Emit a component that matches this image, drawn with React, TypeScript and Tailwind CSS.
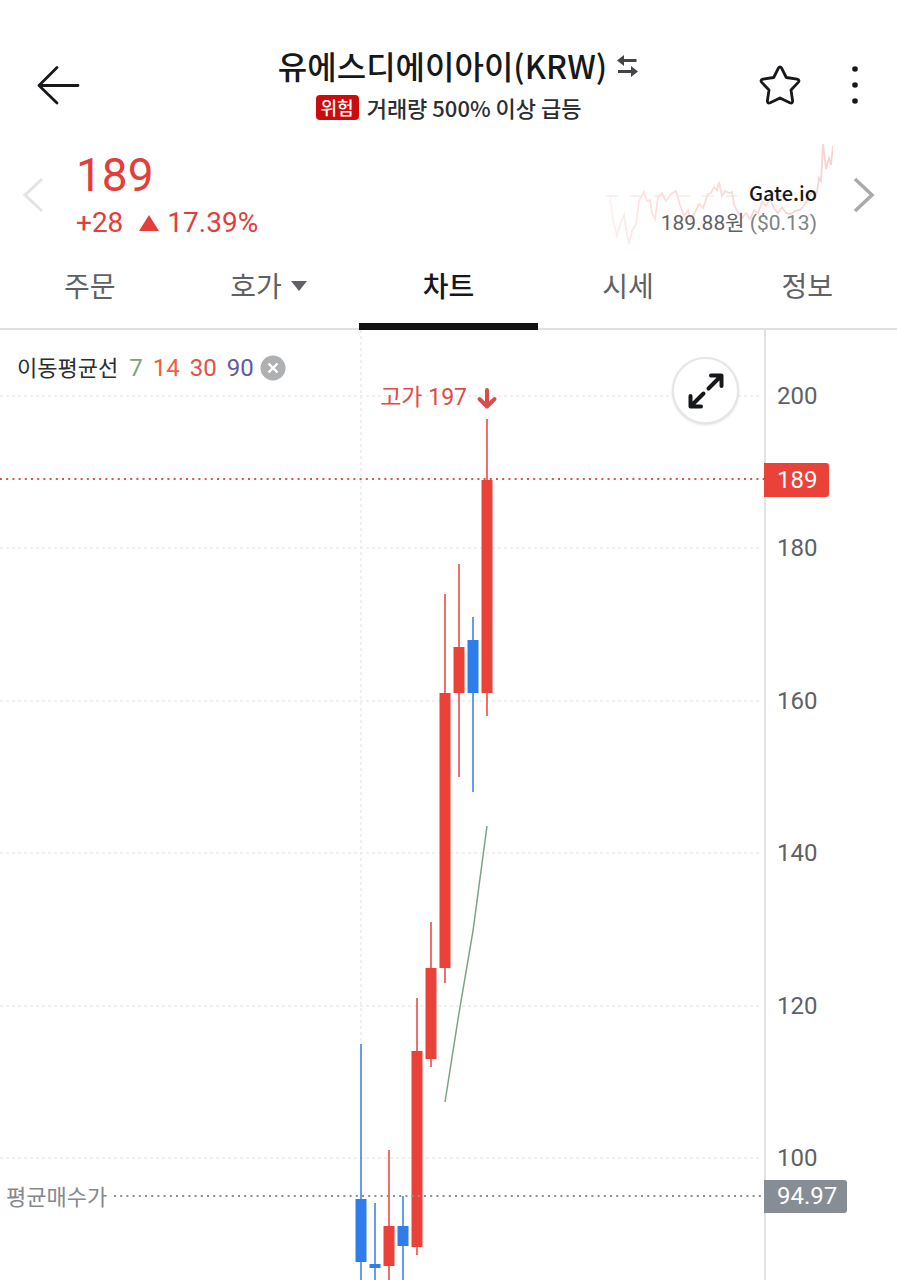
import React from "react";

interface Candle {
  x: number;
  open: number;
  close: number;
  high: number;
  low: number;
}

interface Average {
  period: number;
  className: string;
}

const UP = "#ea4139";
const DOWN = "#2f7deb";

const CHART_HEIGHT = 950;
const PX_PER_UNIT = 7.62;
const CURRENT_PRICE = 189;
const AVERAGE_PRICE = 94.97;

const ticks = [200, 180, 160, 140, 120, 100];
const tabs = ["주문", "호가", "차트", "시세", "정보"];

const averages: Average[] = [
  { period: 7, className: "text-[#7da283]" },
  { period: 14, className: "text-[#f0603a]" },
  { period: 30, className: "text-[#e4504e]" },
  { period: 90, className: "text-[#6258a6]" },
];

const candles: Candle[] = [
  { x: 361, open: 94.6, close: 86.4, high: 115, low: 80 },
  { x: 375, open: 86.1, close: 85.5, high: 94.1, low: 80 },
  { x: 389, open: 85.8, close: 91.1, high: 101, low: 80 },
  { x: 403, open: 91.1, close: 88.4, high: 95, low: 80 },
  { x: 417, open: 88.3, close: 114, high: 121, low: 87.3 },
  { x: 431, open: 113, close: 125, high: 131, low: 112 },
  { x: 445, open: 125, close: 161, high: 174, low: 123 },
  { x: 459, open: 161, close: 167, high: 178, low: 150 },
  { x: 473, open: 168, close: 161, high: 171, low: 148 },
  { x: 487, open: 161, close: 189, high: 197, low: 158 },
];

const ma7 = [
  { x: 445, value: 107.3 },
  { x: 459, value: 119 },
  { x: 473, value: 129.8 },
  { x: 487, value: 143.6 },
];

const toY = (price: number) => Math.round(66 + (200 - price) * PX_PER_UNIT);

const Header = () => (
  <header className="grid grid-cols-[1fr_auto_1fr] items-center pt-[45px]">
    <button type="button" aria-label="뒤로" className="ml-9 justify-self-start">
      <svg width="44" height="40" viewBox="0 0 44 40" fill="none" stroke="#17181b" strokeWidth="2.8" strokeLinecap="round" strokeLinejoin="round">
        <path d="M42 20.5H3M21 2.500L3 20.500L21 38" />
      </svg>
    </button>
    <div className="pb-1">
      <div className="flex h-10 items-center gap-2 pl-5">
        <h1 className="whitespace-nowrap text-[32px] font-medium leading-10 text-[#17181b]">
          유에스디에이아이(KRW)
        </h1>
        <button type="button" aria-label="마켓 전환">
          <svg width="24" height="24" viewBox="0 0 24 24" fill="#434548">
            <path d="M2 7.500L9 2V6H21.500V9H9V13Z" />
            <path d="M23 18.500L16 13V17H3V20H16V24Z" />
          </svg>
        </button>
      </div>
      <p className="mt-2 flex h-7 items-center justify-center gap-2 whitespace-nowrap text-[22px] font-medium leading-7 text-[#2b2d31]">
        <span className="rounded-sm bg-[#cd0b0b] px-[5px] text-lg leading-[25px] text-white">위험</span>
        거래량 500% 이상 급등
      </p>
    </div>
    <div className="mr-8 flex items-center gap-[43px] justify-self-end">
      <button type="button" aria-label="관심 등록">
        <svg width="44" height="44" viewBox="0 0 44 44" fill="none" stroke="#17181b" strokeWidth="2.8" strokeLinejoin="round">
          <path d="M20.400 5.100Q22 2.600 23.600 5.100L28.300 14.500L39 16.200Q42.200 17 40.200 19.400L33 27L34.600 37.800Q34.700 41 31.800 39.800L22 35L12.200 39.800Q9.300 41 9.400 37.800L11 27L3.800 19.400Q1.800 17 5 16.200L15.700 14.500Z" />
        </svg>
      </button>
      <button type="button" aria-label="더보기">
        <svg width="20" height="44" viewBox="0 0 20 44" fill="#17181b">
          <circle cx="10" cy="6" r="2.800" />
          <circle cx="10" cy="22" r="2.800" />
          <circle cx="10" cy="38" r="2.800" />
        </svg>
      </button>
    </div>
  </header>
);

const Sparkline = () => (
  <svg width="232" height="106" viewBox="0 0 232 106" fill="none" className="absolute -right-4 -top-9">
    <defs>
      <linearGradient id="sparkline" x1="0" x2="1" y1="0" y2="0">
        <stop offset="0" stopColor="#fdf1f1" />
        <stop offset="0.2" stopColor="#fae0de" />
        <stop offset="1" stopColor="#f8d3d1" />
      </linearGradient>
    </defs>
    <path d="M5 53H190" stroke="#f9eaea" strokeWidth="1.500" strokeDasharray="12 12" />
    <path
      d="M9 55L12 77L16 93L20 79L23 72L26 91L28 101L31 88L35 81L38 58L43 49L46 58L49 57L51 70L54 76L57 54L61 50L65 58L70 51L75 48L79 62L83 73L87 67L90 77L94 69L98 61L102 65L107 51L110 50L113 44L116 47L118 39L121 53L124 48L128 50L131 49L133 62L137 69L141 75L145 70L149 76L153 67L157 70L161 59L165 63L169 56L173 65L177 70L181 64L185 70L190 71L194 68L199 67L204 61L208 54L212 48L216 50L218 35L220 38L222 1L225 26L228 15L230 22L232 3"
      stroke="url(#sparkline)"
      strokeWidth="1.800"
    />
  </svg>
);

const PriceSummary = () => (
  <section className="flex items-center px-[22px] pb-3 pt-[26px]">
    <button type="button" aria-label="이전">
      <svg width="22" height="36" viewBox="0 0 22 36" fill="none" stroke="#e3e3e4" strokeWidth="3">
        <path d="M20 2L3 18L20 34" />
      </svg>
    </button>
    <div className="ml-8 font-[Roboto,'Noto_Sans_CJK_KR',sans-serif] text-[#e23e3a]">
      <p className="text-[46px] leading-[48px]">189</p>
      <p className="mt-2 flex items-center gap-2 text-[28px] leading-8">
        +28
        <svg width="20" height="16" viewBox="0 0 20 16" fill="currentColor" className="ml-2">
          <path d="M10 0L20 16H0Z" />
        </svg>
        17.39%
      </p>
    </div>
    <div className="relative ml-auto mr-9 self-end text-right">
      <Sparkline />
      <p className="relative text-xl font-medium leading-7 text-[#17181b]">Gate.io</p>
      <p className="relative font-[Roboto,'Noto_Sans_CJK_KR',sans-serif] text-[21px] leading-8 text-[#808286]">
        <span className="text-[#5f6165]">189.88원</span> ($0.13)
      </p>
    </div>
    <button type="button" aria-label="다음">
      <svg width="22" height="36" viewBox="0 0 22 36" fill="none" stroke="#a9aaac" strokeWidth="3.500">
        <path d="M2 2L19 18L2 34" />
      </svg>
    </button>
  </section>
);

const Tabs = () => (
  <nav className="grid h-[79px] grid-cols-5">
    {tabs.map((tab) => {
      const active = tab === "차트";
      return (
        <button key={tab} type="button" className="flex flex-col text-[28px] leading-10">
          <span
            className={
              active
                ? "flex h-[72px] w-full items-center justify-center pb-1 font-medium text-[#17181b]"
                : "flex h-[72px] w-full items-center justify-center gap-2 pb-1 text-[#5f6165]"
            }
          >
            {tab}
            {tab === "호가" && (
              <svg width="18" height="14" viewBox="0 0 18 14" fill="#5f6165">
                <path d="M1 3H17L9 13Z" />
              </svg>
            )}
          </span>
          <span className={active ? "h-[7px] w-full bg-[#111214]" : "h-[7px] w-full border-b-2 border-[#e0e0e1]"} />
        </button>
      );
    })}
  </nav>
);

const Legend = () => (
  <div className="absolute left-[17px] top-5 flex h-9 items-center text-[22px] text-[#2b2d31]">
    <span className="pb-1">이동평균선</span>
    <div className="ml-[11px] flex gap-[10px] font-[Roboto,sans-serif] text-2xl">
      {averages.map((item) => (
        <span key={item.period} className={item.className}>
          {item.period}
        </span>
      ))}
    </div>
    <button type="button" aria-label="이동평균선 제거" className="ml-[6px]">
      <svg width="26" height="26" viewBox="0 0 26 26" fill="none">
        <circle cx="13" cy="13" r="12.500" fill="#afb0b1" />
        <path d="M8.500 8.500L17.500 17.500M17.500 8.500L8.500 17.500" stroke="#fff" strokeWidth="2.400" />
      </svg>
    </button>
  </div>
);

const Plot = () => (
  <svg width="100%" height={CHART_HEIGHT} className="block">
    {/* grid */}
    {ticks.map((tick) => (
      <line key={tick} x1="0" x2="99.500%" y1={toY(tick)} y2={toY(tick)} stroke="#ebebec" strokeWidth="1.500" strokeDasharray="3 3" />
    ))}
    <line x1="361" x2="361" y1="0" y2={toY(115)} stroke="#ebebec" strokeWidth="1.500" strokeDasharray="3 3" />

    {/* candles */}
    {candles.map((candle) => {
      const color = candle.close >= candle.open ? UP : DOWN;
      const top = toY(Math.max(candle.open, candle.close));
      const bottom = toY(Math.min(candle.open, candle.close));
      return (
        <g key={candle.x}>
          <line x1={candle.x} x2={candle.x} y1={toY(candle.high)} y2={toY(candle.low)} stroke={color} strokeWidth="1.500" />
          <rect x={candle.x - 5.5} y={top} width="11" height={bottom - top} fill={color} />
        </g>
      );
    })}

    {/* 7 day average */}
    <polyline points={ma7.map((p) => `${p.x},${toY(p.value)}`).join(" ")} fill="none" stroke="#7da283" strokeWidth="1.500" />

    <line x1="0" x2="100%" y1={toY(CURRENT_PRICE) - 1} y2={toY(CURRENT_PRICE) - 1} stroke="#d9534f" strokeWidth="2" strokeDasharray="2 4.200" />
    <line x1="114" x2="100%" y1={toY(AVERAGE_PRICE)} y2={toY(AVERAGE_PRICE)} stroke="#8c8f94" strokeWidth="2" strokeDasharray="2 4.200" />
    <text x="6" y={toY(AVERAGE_PRICE) + 9} fontSize="22" fill="#85888e">
      평균매수가
    </text>

    {/* high marker */}
    <text x="467" y="75" textAnchor="end" fontSize="23" fill="#dd4b48" className="font-[Roboto,'Noto_Sans_CJK_KR',sans-serif]">
      고가 197
    </text>
    <path d="M487 60V76M479.500 69L487 76.500L494.500 69" fill="none" stroke="#dd4b48" strokeWidth="4" strokeLinecap="round" strokeLinejoin="round" />
  </svg>
);

const PriceAxis = () => (
  <svg width="133" height={CHART_HEIGHT} className="block shrink-0 font-[Roboto,sans-serif]" fontSize="24">
    <rect x="0" y="0" width="2" height={CHART_HEIGHT} fill="#e2e2e3" />
    {ticks.map((tick) => (
      <text key={tick} x="13" y={toY(tick) + 8} fill="#5f6165">
        {tick}
      </text>
    ))}
    <path d="M0 133H62Q65 133 65 136V164Q65 167 62 167H0Z" fill={UP} />
    <text x="13" y="158" fill="#fff">
      {CURRENT_PRICE}
    </text>
    <path d="M0 850H80Q83 850 83 853V880Q83 883 80 883H0Z" fill="#868d94" />
    <text x="13" y="874" fill="#fff">
      {AVERAGE_PRICE}
    </text>
  </svg>
);

const Chart = () => (
  <main className="flex">
    <div className="relative min-w-0 flex-1">
      <Plot />
      <Legend />
      <button
        type="button"
        aria-label="전체 화면"
        className="absolute right-[25px] top-[27px] flex h-[67px] w-[67px] items-center justify-center rounded-full border-2 border-[#e6e6e7] bg-white shadow-sm"
      >
        <svg width="36" height="36" viewBox="0 0 36 36" fill="none" stroke="#17181b" strokeWidth="4" strokeLinecap="round" strokeLinejoin="round">
          <path d="M20.500 15.500L33 3M23 2.500H33.500V13M15.500 20.500L3 33M2.500 23V33.500H13" />
        </svg>
      </button>
    </div>
    <PriceAxis />
  </main>
);

export default function App() {
  return (
    <div className="w-full overflow-hidden bg-white font-['Noto_Sans_CJK_KR',sans-serif]">
      <Header />
      <PriceSummary />
      <Tabs />
      <Chart />
    </div>
  );
}
